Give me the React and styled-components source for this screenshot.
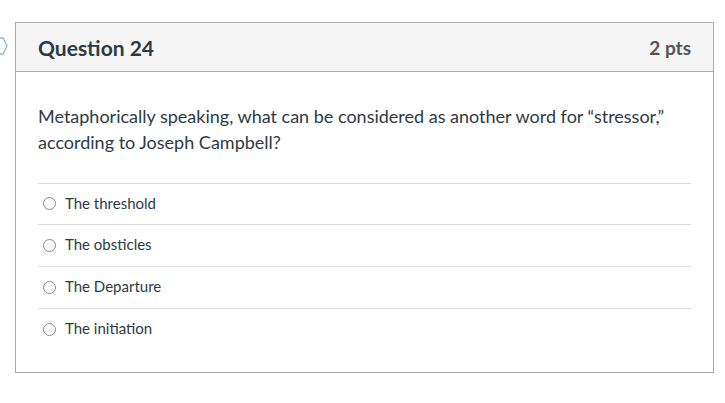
import React from 'react';
import styled, { createGlobalStyle } from 'styled-components';

const GlobalStyle = createGlobalStyle`
  html, body {
    margin: 0;
    padding: 0;
    background: #fff;
  }
  body {
    font-family: Lato, "Open Sans", sans-serif;
    color: #2d3b45;
  }
`;

const Page = styled.div`
  position: relative;
  padding: 22px 0 0 15px;
`;

const Flag = styled.svg`
  position: absolute;
  left: -4px;
  top: 37px;
`;

const Card = styled.div`
  width: 697px;
  height: 349px;
  border: 1px solid #aaa;
  display: flex;
  flex-direction: column;
`;

const Header = styled.div`
  display: flex;
  align-items: center;
  justify-content: space-between;
  height: 48px;
  padding: 0 22px;
  background: #f5f5f5;
  border-bottom: 1px solid #aaa;
`;

const Title = styled.h2`
  margin: 0;
  font-size: 21px;
  font-weight: 700;
  color: #2d3b45;
`;

const Points = styled.span`
  font-size: 19px;
  font-weight: 700;
  color: #555;
`;

const Body = styled.div`
  padding: 31px 22px 0 22px;
`;

const QuestionText = styled.p`
  margin: 0 0 28px 0;
  font-size: 18px;
  line-height: 26px;
  color: #2d3b45;
`;

const Answers = styled.div`
  display: flex;
  flex-direction: column;
`;

const Answer = styled.label`
  display: flex;
  align-items: center;
  box-sizing: border-box;
  height: 42px;
  padding: 0 0 3px 4px;
  border-top: 1px solid #ddd;
  font-size: 15px;
  line-height: 18px;
  color: #2d3b45;

  &:first-child {
    height: 41px;
  }
`;

const Radio = styled.span`
  width: 11px;
  height: 11px;
  border: 1px solid #888;
  border-radius: 50%;
  margin: 2px 9px 0 1px;
  flex-shrink: 0;
`;

const answers = ['The threshold', 'The obsticles', 'The Departure', 'The initiation'];

const App = () => (
  <Page>
    <GlobalStyle />
    <Flag width="12" height="18" viewBox="0 0 12 18">
      <path d="M1 1 L7 1 L11 9 L7 17 L1 17" fill="none" stroke="#8fb7d6" strokeWidth="1.3" />
    </Flag>
    <Card>
      <Header>
        <Title>Question 24</Title>
        <Points>2 pts</Points>
      </Header>
      <Body>
        <QuestionText>
          Metaphorically speaking, what can be considered as another word for “stressor,” according to Joseph Campbell?
        </QuestionText>
        <Answers>
          {answers.map((a) => (
            <Answer key={a}>
              <Radio />
              {a}
            </Answer>
          ))}
        </Answers>
      </Body>
    </Card>
  </Page>
);

export default App;
